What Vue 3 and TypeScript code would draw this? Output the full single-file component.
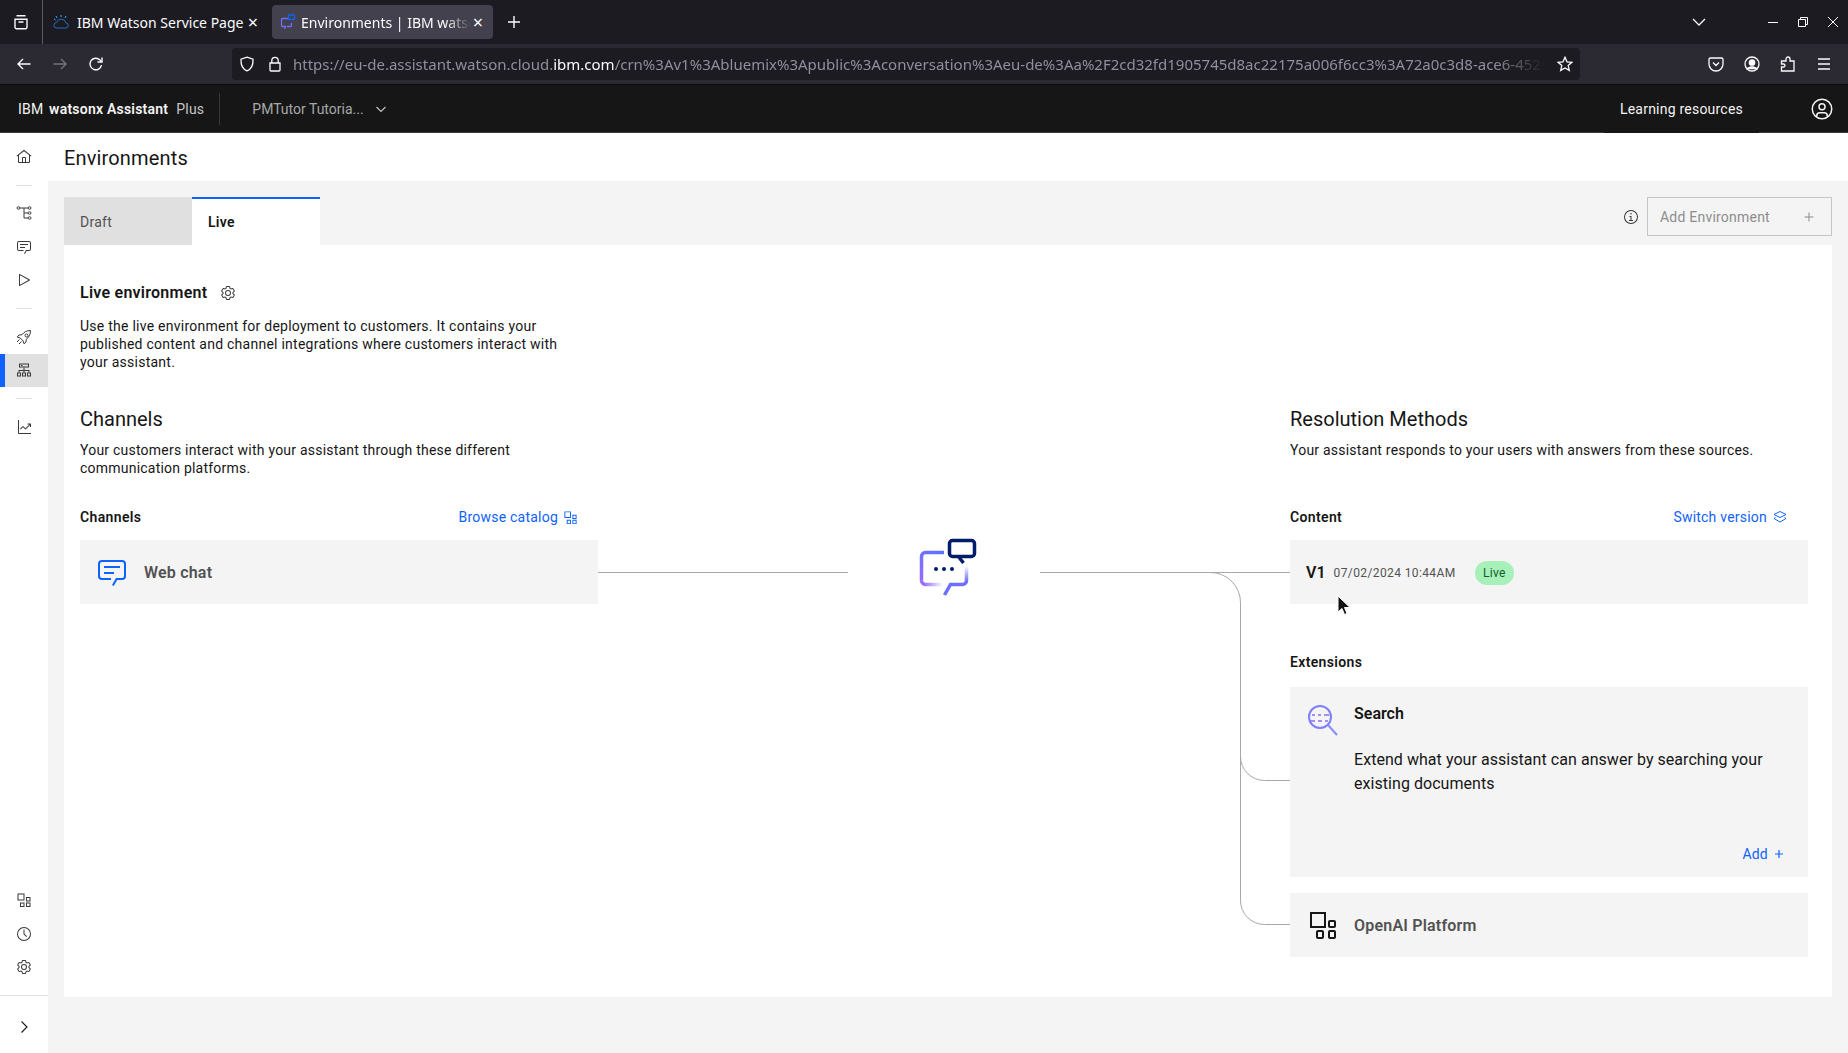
<script setup lang="ts">
interface NavItem {
  name: string
  paths?: string[]
  lines?: string[]
  active?: boolean
}

const gear = [
  'M27,16.76c0-.25,0-.5,0-.76s0-.51,0-.77l1.92-1.68A2,2,0,0,0,29.3,11L26.94,7a2,2,0,0,0-1.73-1,2,2,0,0,0-.64.1l-2.43.82a11.35,11.35,0,0,0-1.31-.75l-.51-2.52a2,2,0,0,0-2-1.61H13.64a2,2,0,0,0-2,1.61l-.51,2.52a11.48,11.48,0,0,0-1.32.75L7.43,6.06A2,2,0,0,0,6.79,6,2,2,0,0,0,5.06,7L2.7,11a2,2,0,0,0,.41,2.51L5,15.24c0,.25,0,.5,0,.76s0,.51,0,.77L3.11,18.45A2,2,0,0,0,2.7,21L5.06,25a2,2,0,0,0,1.73,1,2,2,0,0,0,.64-.1l2.43-.82a11.35,11.35,0,0,0,1.31.75l.51,2.52a2,2,0,0,0,2,1.61h4.72a2,2,0,0,0,2-1.61l.51-2.52a11.48,11.48,0,0,0,1.32-.75l2.42.82a2,2,0,0,0,.64.1,2,2,0,0,0,1.73-1L29.3,21a2,2,0,0,0-.41-2.51ZM25.21,24l-3.43-1.16a8.86,8.86,0,0,1-2.71,1.57L18.36,28H13.64l-.71-3.55a9.36,9.36,0,0,1-2.7-1.57L6.79,24,4.43,20l2.72-2.4a8.9,8.9,0,0,1,0-3.13L4.43,12,6.79,8l3.43,1.16a8.86,8.86,0,0,1,2.71-1.57L13.64,4h4.72l.71,3.55a9.36,9.36,0,0,1,2.7,1.57L25.21,8,27.57,12l-2.72,2.4a8.9,8.9,0,0,1,0,3.13L27.57,20Z',
  'M16,22a6,6,0,1,1,6-6A5.94,5.94,0,0,1,16,22Zm0-10a3.91,3.91,0,0,0-4,4,3.91,3.91,0,0,0,4,4,3.91,3.91,0,0,0,4-4A3.91,3.91,0,0,0,16,12Z',
]
const chat = [
  'M17.74,30,16,29l4-7h6a2,2,0,0,0,2-2V8a2,2,0,0,0-2-2H6A2,2,0,0,0,4,8V20a2,2,0,0,0,2,2h9v2H6a4,4,0,0,1-4-4V8A4,4,0,0,1,6,4H26a4,4,0,0,1,4,4V20a4,4,0,0,1-4,4H21.16Z',
  'M8 10H24V12H8z',
  'M8 16H18V18H8z',
]
const apps = [
  'M3 3h14v14H3zM5 5v10h10V5z',
  'M20 10h9v9h-9zM22 12v5h5v-5z',
  'M8 21h9v9H8zM10 23v5h5v-5z',
  'M20 21h9v9h-9zM22 23v5h5v-5z',
]

const navGroups: NavItem[][] = [
  [
    {
      name: 'home',
      paths: [
        'M16.6123,2.2138a1.01,1.01,0,0,0-1.2427,0L1,13.4194l1.2427,1.5717L4,13.6209V26a2.0041,2.0041,0,0,0,2,2H26a2.0037,2.0037,0,0,0,2-2V13.63L29.7573,15,31,13.4282ZM18,26H14V18h4Zm2,0V18a2.0023,2.0023,0,0,0-2-2H14a2.002,2.002,0,0,0-2,2v8H6V12.0615l10-7.79,10,7.8005V26Z',
      ],
    },
  ],
  [
    {
      name: 'actions',
      lines: [
        'M2 6a3 2.500 0 1 1 6 0a3 2.500 0 1 1-6 0z',
        'M24 6a3 2.500 0 1 1 6 0a3 2.500 0 1 1-6 0z',
        'M24 16a3 2.500 0 1 1 6 0a3 2.500 0 1 1-6 0z',
        'M24 26a3 2.500 0 1 1 6 0a3 2.500 0 1 1-6 0z',
        'M8 6h16M16 6v20h8M16 16h8',
      ],
    },
    { name: 'preview', paths: chat },
    {
      name: 'run',
      paths: [
        'M7,28a1,1,0,0,1-1-1V5a1,1,0,0,1,1.4819-.8763l20,11a1,1,0,0,1,0,1.7525l-20,11A1.0005,1.0005,0,0,1,7,28ZM8,6.6909V25.3088L24.9248,16Z',
      ],
    },
  ],
  [
    {
      name: 'publish',
      lines: [
        'M29 3C21 3 15.500 6.500 12 11.500L6 12 2.500 16l6 2 5.500 5.500 2 6 4-3.500.5-5.500C25.500 17 29 11 29 3z',
        'M18 13a3 3 0 1 1 6 0a3 3 0 1 1-6 0z',
        'M7 21l-5 5M11 25l-5 5',
      ],
    },
    {
      name: 'environments',
      active: true,
      paths: [
        'M6 3h20v8H6zM8 5v4h16V5zM10 6h3v2h-3z',
        'M15 11h2v5h10v5h-2v-3H17v3h-2v-3H7v3H5v-5h10z',
        'M2 21h8v8H2zM4 23v4h4v-4zM12 21h8v8h-8zM14 23v4h4v-4zM22 21h8v8h-8zM24 23v4h4v-4z',
      ],
    },
  ],
  [
    {
      name: 'analyze',
      paths: [
        'M4 2v26a2 2 0 0 0 2 2h24v-2H6V2z',
        'M30 9h-7v2h3.600L19 18.600l-4.300-4.300a1 1 0 0 0-1.400 0L8 19.600 9.400 21l4.600-4.600 4.300 4.300a1 1 0 0 0 1.400 0L28 12.400V16h2z',
      ],
    },
  ],
]
const bottomNav: NavItem[] = [
  { name: 'integrations', paths: apps },
  {
    name: 'versions',
    paths: [
      'M16,30A14,14,0,1,1,30,16,14,14,0,0,1,16,30ZM16,4A12,12,0,1,0,28,16,12,12,0,0,0,16,4Z',
      'M20.59 22 15 16.410 15 7 17 7 17 15.580 22 20.590 20.590 22z',
    ],
  },
  { name: 'settings', paths: gear },
]

const url =
  'crn%3Av1%3Abluemix%3Apublic%3Aconversation%3Aeu-de%3Aa%2F2cd32fd1905745d8ac22175a006f6cc3%3A72a0c3d8-ace6-4529'
</script>

<template>
  <div class="page">
    <!-- browser -->
    <div class="tabstrip">
      <div class="tabs-all">
        <svg width="16" height="16" viewBox="0 0 16 16" fill="none" stroke="#fbfbfe" stroke-width="1.400">
          <path d="M3.500 1.700h9M2 5.200h12v8a1.500 1.500 0 0 1-1.500 1.500h-9A1.500 1.500 0 0 1 2 13.200zM5.500 8h5" />
        </svg>
      </div>
      <div class="tab">
        <svg class="favicon" width="16" height="16" viewBox="0 0 16 16" fill="none" stroke="#1f70c1" stroke-width="1">
          <path d="M3 14h9.500a2.500 2.500 0 0 0 .5-5 5 5 0 0 0-9.600-.5A2.800 2.800 0 0 0 3 14z" />
          <path d="M8 1v2M3 2l1 2M13 2l-1 2M1 5l1.500 1" stroke="#33b1ff" />
        </svg>
        <span class="tab-title">IBM Watson Service Page</span>
        <span class="tab-x">×</span>
      </div>
      <div class="tab selected">
        <svg class="favicon" width="16" height="16" viewBox="0 0 16 16" fill="none" stroke="#6f6fff" stroke-width="1.300">
          <path d="M9 4.500H2.500a1 1 0 0 0-1 1v6a1 1 0 0 0 1 1h3l-1 2.500M7 12.500h3.500a1 1 0 0 0 1-1V9" />
          <rect x="8.500" y="1" width="6" height="4.500" rx=".8" stroke="#0f62fe" />
        </svg>
        <span class="tab-title fade">Environments | IBM watsonx Assistant</span>
        <span class="tab-x">×</span>
      </div>
      <svg class="newtab" width="16" height="16" viewBox="0 0 16 16" stroke="#fbfbfe" stroke-width="1.400">
        <path d="M8 2v12M2 8h12" />
      </svg>
      <div class="strip-right">
        <svg width="16" height="16" viewBox="0 0 16 16" fill="none" stroke="#fbfbfe" stroke-width="1.300">
          <path d="M2 5l6 6 6-6" />
        </svg>
        <div class="winbtns">
          <svg width="12" height="12" viewBox="0 0 12 12" stroke="#fbfbfe"><path d="M1 6.500h10" /></svg>
          <svg width="12" height="12" viewBox="0 0 12 12" fill="none" stroke="#fbfbfe">
            <path d="M1.500 3.500h7v7h-7zM3.500 3.500v-2h7v7h-2" />
          </svg>
          <svg width="12" height="12" viewBox="0 0 12 12" stroke="#fbfbfe"><path d="M1 1l10 10M11 1L1 11" /></svg>
        </div>
      </div>
    </div>

    <div class="toolbar">
      <div class="nav-btns">
        <svg width="16" height="16" viewBox="0 0 16 16" fill="none" stroke="#fbfbfe" stroke-width="1.400">
          <path d="M14.500 8H2M7 3L2 8l5 5" />
        </svg>
        <svg width="16" height="16" viewBox="0 0 16 16" fill="none" stroke="#74737b" stroke-width="1.400">
          <path d="M1.500 8H14M9 3l5 5-5 5" />
        </svg>
        <svg width="16" height="16" viewBox="0 0 16 16" fill="none" stroke="#fbfbfe" stroke-width="1.400">
          <path d="M13.500 9a5.800 5.800 0 1 1-1.500-5l1.500 1.500" />
          <path d="M14 1.500V6H9.500" />
        </svg>
      </div>
      <div class="urlbar">
        <svg width="16" height="16" viewBox="0 0 16 16" fill="none" stroke="#fbfbfe" stroke-width="1.300">
          <path d="M8 1.200l6 2c.300 5.500-1.500 9.800-6 11.600C3.500 13 1.700 8.700 2 3.200z" />
        </svg>
        <svg width="16" height="16" viewBox="0 0 16 16" fill="none" stroke="#fbfbfe" stroke-width="1.300">
          <path d="M4.800 7V4.500a3.200 3.200 0 0 1 6.400 0V7M3 7h10v7a1 1 0 0 1-1 1H4a1 1 0 0 1-1-1z" />
        </svg>
        <div class="url">
          <span class="dim">https://eu-de.assistant.watson.cloud.</span><span class="bright">ibm.com</span><span class="dim">/{{ url }}</span>
        </div>
        <svg width="16" height="16" viewBox="0 0 16 16" fill="none" stroke="#fbfbfe" stroke-width="1.300">
          <path d="M8 1.300l2 4.500 4.900.5-3.700 3.300 1.100 4.800L8 12l-4.300 2.400 1.100-4.800L1.100 6.300 6 5.800z" />
        </svg>
      </div>
      <div class="tool-btns">
        <svg width="16" height="16" viewBox="0 0 16 16" fill="none" stroke="#fbfbfe" stroke-width="1.300">
          <path d="M2.500 2h11A1.500 1.500 0 0 1 15 3.500V8a7 7 0 0 1-14 0V3.500A1.500 1.500 0 0 1 2.500 2zM5 6.500l3 3 3-3" />
        </svg>
        <svg width="16" height="16" viewBox="0 0 16 16" fill="none" stroke="#fbfbfe" stroke-width="1.300">
          <circle cx="8" cy="8" r="7" />
          <circle cx="8" cy="6.500" r="2.700" fill="#fbfbfe" />
          <path d="M3.500 12.500c2-2.200 7-2.200 9 0z" fill="#fbfbfe" />
        </svg>
        <svg width="16" height="16" viewBox="0 0 16 16" fill="none" stroke="#fbfbfe" stroke-width="1.300">
          <path d="M1.500 15v-4h2a1.500 1.500 0 0 0 0-3h-2V5H6V3a2 2 0 0 1 4 0v2h4v10z" />
        </svg>
        <svg width="16" height="16" viewBox="0 0 16 16" stroke="#fbfbfe" stroke-width="1.300">
          <path d="M2 3h12M2 8h12M2 13h12" />
        </svg>
      </div>
    </div>

    <!-- app header -->
    <header class="appbar">
      <div class="brand">IBM <b>watsonx Assistant</b><span class="plan">Plus</span></div>
      <div class="assistant">
        <span>PMTutor Tutoria...</span>
        <svg width="12" height="12" viewBox="0 0 12 12" fill="none" stroke="#c6c6c6" stroke-width="1.100">
          <path d="M1.500 4l4.500 4.500L10.500 4" />
        </svg>
      </div>
      <div class="learning">Learning resources</div>
      <svg class="user" width="24" height="24" viewBox="0 0 32 32" fill="#f4f4f4">
        <path d="M16,8a5,5,0,1,0,5,5A5,5,0,0,0,16,8Zm0,8a3,3,0,1,1,3-3A3,3,0,0,1,16,16Z" />
        <path d="M16,2A14,14,0,1,0,30,16,14.016,14.016,0,0,0,16,2ZM10,26.377V25a3,3,0,0,1,3-3h6a3,3,0,0,1,3,3v1.377a11.899,11.899,0,0,1-12,0Zm13.992-1.451A5.002,5.002,0,0,0,19,20H13a5.002,5.002,0,0,0-4.992,4.926,12,12,0,1,1,15.985,0Z" />
      </svg>
    </header>

    <div class="body">
      <nav class="sidebar">
        <template v-for="(group, i) in navGroups" :key="i">
          <hr v-if="i > 0" class="nav-sep" />
          <a v-for="item in group" :key="item.name" class="nav-item" :class="{ active: item.active }">
            <svg width="16" height="16" viewBox="0 0 32 32">
              <path v-for="d in item.paths" :key="d" :d="d" />
              <path v-for="d in item.lines" :key="d" :d="d" class="nav-line" />
            </svg>
          </a>
        </template>
        <div class="nav-bottom">
          <a v-for="item in bottomNav" :key="item.name" class="nav-item">
            <svg width="16" height="16" viewBox="0 0 32 32"><path v-for="d in item.paths" :key="d" :d="d" /></svg>
          </a>
        </div>
        <div class="nav-expand">
          <svg width="16" height="16" viewBox="0 0 16 16" fill="none" stroke="#161616" stroke-width="1.100">
            <path d="M5.500 2.500L11 8l-5.500 5.500" />
          </svg>
        </div>
      </nav>

      <main class="main">
        <h1 class="page-title">Environments</h1>
        <div class="content">
          <div class="tabbar">
            <div class="env-tabs">
              <div class="env-tab">Draft</div>
              <div class="env-tab current">Live</div>
            </div>
            <div class="tab-actions">
              <svg width="16" height="16" viewBox="0 0 32 32" fill="#393939">
                <path d="M17 22v-8h-4v2h2v6h-3v2h8v-2z" />
                <path d="M16 8a1.500 1.500 0 1 0 1.500 1.500A1.500 1.500 0 0 0 16 8z" />
                <path d="M16 30a14 14 0 1 1 14-14 14 14 0 0 1-14 14zm0-26a12 12 0 1 0 12 12A12 12 0 0 0 16 4z" />
              </svg>
              <button class="add-env" type="button">
                Add Environment
                <svg width="12" height="12" viewBox="0 0 12 12" stroke="#8d8d8d"><path d="M6 1.500v9M1.500 6h9" /></svg>
              </button>
            </div>
          </div>

          <section class="panel">
            <div class="intro">
              <h2 class="intro-title">
                Live environment
                <svg width="16" height="16" viewBox="0 0 32 32" fill="#393939">
                  <path v-for="d in gear" :key="d" :d="d" />
                </svg>
              </h2>
              <p class="intro-text">
                Use the live environment for deployment to customers. It contains your published content and channel
                integrations where customers interact with your assistant.
              </p>
            </div>

            <div class="columns">
              <div class="col">
                <h3 class="col-title">Channels</h3>
                <p class="col-text">Your customers interact with your assistant through these different communication platforms.</p>
                <div class="label-row">
                  <span class="label">Channels</span>
                  <a class="link">
                    Browse catalog
                    <svg width="15" height="15" viewBox="0 0 32 32" fill="#0f62fe"><path v-for="d in apps" :key="d" :d="d" /></svg>
                  </a>
                </div>
                <div class="card row-card">
                  <svg width="32" height="32" viewBox="0 0 32 32" fill="#0f62fe"><path v-for="d in chat" :key="d" :d="d" /></svg>
                  <span class="card-name">Web chat</span>
                </div>
              </div>

              <div class="middle">
                <svg class="wires" width="692" height="560" viewBox="0 0 692 560" fill="none">
                  <defs>
                    <linearGradient id="bubbleLeft" gradientUnits="userSpaceOnUse" x1="28" y1="17" x2="5" y2="50">
                      <stop offset="0" stop-color="#5c72ff" />
                      <stop offset="1" stop-color="#9a6cff" />
                    </linearGradient>
                    <linearGradient id="bubbleBottom" gradientUnits="userSpaceOnUse" x1="8" y1="0" x2="27" y2="0">
                      <stop offset="0" stop-color="#9a6cff" />
                      <stop offset="1" stop-color="#ffffff" />
                    </linearGradient>
                    <linearGradient id="bubbleRight" gradientUnits="userSpaceOnUse" x1="0" y1="31" x2="0" y2="46">
                      <stop offset="0" stop-color="#ffffff" />
                      <stop offset="1" stop-color="#6f6fff" />
                    </linearGradient>
                  </defs>
                  <g stroke="#a8a8a8">
                    <path d="M0 167.500H250M442 167.500H692" />
                    <path d="M612 167.500a30 30 0 0 1 30.500 30.500V351a24 24 0 0 0 24 24.500H692" />
                    <path d="M642.500 351V495a24 24 0 0 0 24 24.500H692" />
                  </g>
                  <g transform="translate(318 130)" stroke-width="3.500">
                    <rect x="33.500" y="5.500" width="25" height="16" rx="3" stroke="#001d6c" />
                    <path d="M42 21l5.500 7" stroke="#001d6c" />
                    <path d="M28 17.500H9.500a4 4 0 0 0-4 4V45" stroke="url(#bubbleLeft)" />
                    <path d="M5.500 45a4 4 0 0 0 4 4.500H27" stroke="url(#bubbleBottom)" />
                    <path d="M50.500 31V45.500a4 4 0 0 1-4 4H34.500L28.500 60" stroke="url(#bubbleRight)" />
                    <g fill="#001d6c" stroke="none">
                      <circle cx="20" cy="34" r="2" />
                      <circle cx="28" cy="34" r="2" />
                      <circle cx="36" cy="34" r="2" />
                    </g>
                  </g>
                </svg>
              </div>

              <div class="col">
                <h3 class="col-title">Resolution Methods</h3>
                <p class="col-text">Your assistant responds to your users with answers from these sources.</p>
                <div class="label-row">
                  <span class="label">Content</span>
                  <a class="link">
                    Switch version
                    <svg width="16" height="16" viewBox="0 0 16 16" fill="none" stroke="#0f62fe">
                      <path d="M8 2.500l6 3-6 3-6-3zM3.500 8.500L2 9.500l6 3.500 6-3.500-1.500-1" />
                    </svg>
                  </a>
                </div>
                <div class="card row-card version">
                  <span class="version-name">V1</span>
                  <span class="version-date">07/02/2024 10:44AM</span>
                  <span class="tag">Live</span>
                </div>
                <div class="label ext-label">Extensions</div>
                <div class="card search-card">
                  <svg class="search-icon" width="32" height="32" viewBox="0 0 32 32" fill="none" stroke="#8a8aff" stroke-width="2">
                    <circle cx="14" cy="13" r="11" stroke="#7f7fff" />
                    <path d="M22 21l9 10" />
                    <path d="M6 11h3M12 11h3M18 11h5M4 17h5M12 17h4M19 17h3" stroke="#8a6cf0" stroke-width="1.500" />
                  </svg>
                  <div class="search-body">
                    <div class="search-title">Search</div>
                    <p class="search-text">Extend what your assistant can answer by searching your existing documents</p>
                    <a class="link add-link">
                      Add
                      <svg width="12" height="12" viewBox="0 0 12 12" stroke="#0f62fe" stroke-width="1.200"><path d="M6 2v8M2 6h8" /></svg>
                    </a>
                  </div>
                </div>
                <div class="card row-card openai">
                  <svg width="32" height="32" viewBox="0 0 32 32" fill="none" stroke="#161616" stroke-width="2">
                    <rect x="5" y="4" width="14" height="14" />
                    <rect x="23" y="12" width="6" height="6" rx="1" />
                    <rect x="11" y="22" width="6" height="7" rx="1" />
                    <rect x="23" y="22" width="6" height="7" rx="1" />
                  </svg>
                  <span class="card-name">OpenAI Platform</span>
                </div>
              </div>
            </div>
          </section>
        </div>
      </main>
    </div>

    <svg class="cursor" width="14" height="22" viewBox="0 0 14 22">
      <path d="M1 1v16l4-3.500 2.500 6 2.500-1-2.500-6H13z" fill="#111" stroke="#fff" />
    </svg>
  </div>
</template>

<style scoped>
.page {
  position: relative;
  display: flex;
  flex-direction: column;
  height: 1053px;
  overflow: hidden;
  background: #fff;
  color: #161616;
  font-family: Roboto, "Liberation Sans", sans-serif;
  font-size: 14px;
  letter-spacing: 0.25px;
}

/* browser */
.tabstrip {
  display: flex;
  align-items: center;
  height: 44px;
  flex: none;
  background: #1c1b22;
  color: #fbfbfe;
  font-family: "Noto Sans", sans-serif;
  font-size: 14px;
  letter-spacing: 0;
}
.tabs-all {
  display: flex;
  align-items: center;
  justify-content: center;
  width: 42px;
  height: 100%;
  border-right: 1px solid #5b5b66;
}
.tab {
  display: flex;
  align-items: center;
  width: 225px;
  height: 34px;
  margin-top: -1px;
  padding: 0 10px 0 10px;
  box-sizing: border-box;
  border-radius: 4px;
}
.tab.selected {
  width: 221px;
  margin-left: 4px;
  padding-left: 8px;
  background: #42414d;
}
.tab.selected .favicon {
  margin-right: 5px;
}
.favicon {
  flex: none;
  margin-right: 8px;
}
.tab-title {
  flex: 1;
  padding-top: 1px;
  overflow: hidden;
  white-space: nowrap;
}
.tab-title.fade {
  -webkit-mask-image: linear-gradient(to right, #000 85%, transparent);
  mask-image: linear-gradient(to right, #000 85%, transparent);
}
.tab-x {
  flex: none;
  margin-left: 2px;
  font-size: 18px;
  line-height: 16px;
}
.newtab {
  margin-left: 13px;
}
.strip-right {
  display: flex;
  align-items: center;
  margin-left: auto;
}
.winbtns {
  display: flex;
  gap: 18px;
  margin-left: 60px;
  margin-right: 9px;
}
.toolbar {
  display: flex;
  align-items: center;
  height: 41px;
  flex: none;
  background: #2b2a33;
  border-bottom: 1px solid #0c0c0d;
  box-sizing: border-box;
  letter-spacing: 0;
}
.nav-btns {
  display: flex;
  gap: 20px;
  width: 232px;
  padding-left: 16px;
  box-sizing: border-box;
}
.urlbar {
  display: flex;
  align-items: center;
  gap: 12px;
  width: 1348px;
  height: 32px;
  padding: 0 7px;
  box-sizing: border-box;
  background: #1c1b22;
  border-radius: 4px;
}
.url {
  flex: 1;
  overflow: hidden;
  white-space: nowrap;
  font-family: "Noto Sans", sans-serif;
  font-size: 15px;
  margin-left: -2px;
  -webkit-mask-image: linear-gradient(to right, #000 96%, transparent);
  mask-image: linear-gradient(to right, #000 96%, transparent);
}
.dim {
  color: #8f8f9d;
}
.bright {
  color: #fbfbfe;
}
.tool-btns {
  display: flex;
  gap: 20px;
  margin-left: auto;
  margin-right: 16px;
}

/* app header */
.appbar {
  display: flex;
  align-items: center;
  height: 48px;
  flex: none;
  box-sizing: border-box;
  background: #161616;
  color: #f4f4f4;
  border-bottom: 1px solid #393939;
  letter-spacing: 0.22px;
}
.brand {
  display: flex;
  align-items: center;
  height: 32px;
  padding: 0 15px 0 18px;
  border-right: 1px solid #393939;
  white-space: pre;
}
.brand b {
  font-weight: 600;
  margin-left: 2px;
}
.plan {
  margin-left: 8px;
  color: #c6c6c6;
}
.assistant {
  display: flex;
  align-items: center;
  gap: 11px;
  margin-left: 32px;
  color: #a8a8a8;
  letter-spacing: 0;
}
.learning {
  display: flex;
  align-items: center;
  align-self: flex-start;
  height: 48px;
  margin-left: auto;
  padding: 0 16px;
  background: #161616;
}
.user {
  margin: 0 14px 0 51px;
}

/* side nav */
.body {
  display: flex;
  flex: 1;
  min-height: 0;
}
.sidebar {
  display: flex;
  flex-direction: column;
  width: 48px;
  flex: none;
  padding-top: 7px;
  box-sizing: border-box;
  background: #fff;
}
.nav-item {
  display: flex;
  align-items: center;
  justify-content: center;
  height: 33.500px;
}
.nav-item svg {
  fill: #393939;
}
.nav-item .nav-line {
  fill: none;
  stroke: #393939;
  stroke-width: 2;
}
.nav-item.active {
  background: #e0e0e0;
  box-shadow: inset 5px 0 0 #0f62fe;
}
.nav-sep {
  width: 16px;
  height: 1px;
  margin: 11px 16px;
  border: 0;
  background: #e0e0e0;
}
.nav-bottom {
  margin-top: auto;
  padding-bottom: 11px;
}
.nav-expand {
  display: flex;
  align-items: center;
  justify-content: center;
  height: 58px;
  flex: none;
  padding-top: 4px;
  box-sizing: border-box;
  border-top: 1px solid #e0e0e0;
}

/* main */
.main {
  display: flex;
  flex-direction: column;
  flex: 1;
  min-width: 0;
}
.page-title {
  height: 48px;
  margin: 0;
  padding-left: 16px;
  background: #fff;
  font-size: 20px;
  font-weight: 400;
  line-height: 50px;
  letter-spacing: 0.15px;
}
.content {
  flex: 1;
  padding: 16px;
  background: #f4f4f4;
}
.tabbar {
  display: flex;
  align-items: flex-start;
  justify-content: space-between;
  height: 48px;
}
.env-tabs {
  display: flex;
}
.env-tab {
  display: flex;
  align-items: center;
  width: 128px;
  height: 48px;
  padding: 2px 0 0 16px;
  box-sizing: border-box;
  background: #e0e0e0;
  color: #525252;
}
.env-tab.current {
  padding-top: 0;
  background: #fff;
  color: #161616;
  font-weight: 600;
  border-top: 2px solid #0f62fe;
}
.tab-actions {
  display: flex;
  align-items: center;
  gap: 8px;
}
.add-env {
  display: flex;
  align-items: center;
  justify-content: space-between;
  width: 185px;
  height: 39px;
  padding: 0 16px 0 12px;
  border: 1px solid #c6c6c6;
  background: #f4f4f4;
  color: #8d8d8d;
  font: inherit;
  letter-spacing: 0.22px;
}
.panel {
  height: 752px;
  padding: 37px 24px 0 16px;
  box-sizing: border-box;
  background: #fff;
}
.intro-title {
  display: flex;
  align-items: center;
  gap: 13px;
  margin: 0;
  font-size: 16px;
  font-weight: 600;
  line-height: 22px;
}
.intro-text {
  width: 490px;
  margin: 13px 0 0;
  line-height: 18px;
}
.columns {
  display: grid;
  grid-template-columns: 518px 1fr 518px;
  margin-top: 34px;
}
.col-title {
  margin: 0;
  font-size: 20px;
  font-weight: 400;
  line-height: 28px;
  letter-spacing: 0;
}
.col-text {
  width: 480px;
  min-height: 36px;
  margin: 8px 0 0;
  line-height: 18px;
  letter-spacing: 0.22px;
}
.label-row {
  display: flex;
  align-items: center;
  justify-content: space-between;
  height: 20px;
  margin-top: 30px;
  padding-right: 20px;
}
.label {
  font-weight: 600;
  line-height: 20px;
  letter-spacing: 0.35px;
}
.link {
  display: inline-flex;
  align-items: center;
  gap: 5px;
  color: #0f62fe;
  letter-spacing: 0.22px;
}
.card {
  background: #f4f4f4;
}
.row-card {
  display: flex;
  align-items: center;
  height: 64px;
  margin-top: 13px;
  padding-left: 16px;
}
.card-name {
  margin-left: 16px;
  font-size: 16px;
  font-weight: 600;
  color: #525252;
  letter-spacing: 0.2px;
}
.middle {
  position: relative;
}
.wires {
  position: absolute;
  top: 0;
  left: 0;
}
.version-name {
  font-size: 16px;
  font-weight: 600;
  letter-spacing: 0;
}
.version-date {
  margin-left: 8px;
  padding-top: 1px;
  font-size: 12px;
  color: #525252;
  letter-spacing: 0.39px;
}
.tag {
  margin-left: 19px;
  margin-top: 1px;
  padding: 0 8.500px;
  border-radius: 12px;
  background: #a7f0ba;
  color: #0e6027;
  font-size: 12px;
  line-height: 24px;
}
.ext-label {
  margin-top: 48px;
}
.search-card {
  display: flex;
  height: 190px;
  margin-top: 15px;
  padding: 17px 23px 0 16px;
  box-sizing: border-box;
}
.search-body {
  flex: 1;
  margin-left: 16px;
}
.search-title {
  font-size: 16px;
  font-weight: 600;
  line-height: 20px;
  letter-spacing: 0;
}
.search-text {
  margin: 24px 0 0;
  font-size: 16px;
  line-height: 24px;
  letter-spacing: 0.05px;
}
.add-link {
  display: flex;
  justify-content: flex-end;
  margin-top: 50px;
}
.row-card.openai {
  margin-top: 16px;
}
.cursor {
  position: absolute;
  left: 1337px;
  top: 595px;
}
</style>

<style>
html,
body {
  margin: 0;
}
</style>
